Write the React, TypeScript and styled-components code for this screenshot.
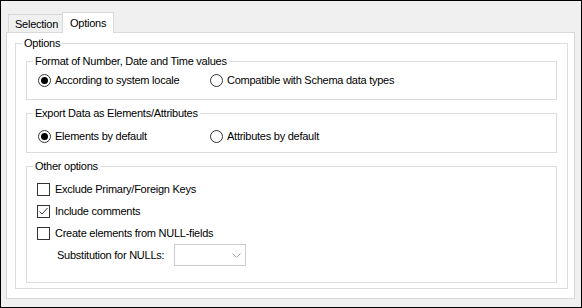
import { FC, ReactNode } from "react";
import styled, { createGlobalStyle } from "styled-components";

const GlobalStyle = createGlobalStyle`
  html, body {
    margin: 0;
    padding: 0;
    background: #f0f0f0;
  }

  * {
    box-sizing: border-box;
  }
`;

type ChoiceProps = {
  checked?: boolean;
  children: ReactNode;
};

const RadioOption: FC<ChoiceProps> = ({ checked, children }) => (
  <Choice>
    <RadioMark $checked={checked} />
    <span>{children}</span>
  </Choice>
);

const CheckOption: FC<ChoiceProps> = ({ checked, children }) => (
  <Choice>
    <CheckMark>
      {checked && (
        <svg width="11" height="11" viewBox="0 0 11 11">
          <polyline
            points="1.5,5.5 4,8 9.5,2"
            fill="none"
            stroke="#333"
            strokeWidth="1"
          />
        </svg>
      )}
    </CheckMark>
    <span>{children}</span>
  </Choice>
);

const App: FC = () => {
  return (
    <>
      <GlobalStyle />
      <Window>
        <TabStrip>
          <Tab>Selection</Tab>
          <Tab $active>Options</Tab>
        </TabStrip>
        <Panel>
          <GroupBox $pad="4px 10px 5px 10px">
            <Legend $shift={-4}>Options</Legend>

            <GroupBox $pad="6px 10px 12px 11px">
              <Legend $shift={-5}>Format of Number, Date and Time values</Legend>
              <OptionGrid>
                <RadioOption checked>According to system locale</RadioOption>
                <RadioOption>Compatible with Schema data types</RadioOption>
              </OptionGrid>
            </GroupBox>

            <GroupBox $pad="10px 10px 9px 11px" $spaced>
              <Legend $shift={-5}>Export Data as Elements/Attributes</Legend>
              <OptionGrid>
                <RadioOption checked>Elements by default</RadioOption>
                <RadioOption>Attributes by default</RadioOption>
              </OptionGrid>
            </GroupBox>

            <GroupBox $pad="10px 10px 16px 11px" $spaced>
              <Legend $shift={-5}>Other options</Legend>
              <CheckList>
                <CheckOption>Exclude Primary/Foreign Keys</CheckOption>
                <CheckOption checked>Include comments</CheckOption>
                <CheckOption>Create elements from NULL-fields</CheckOption>
              </CheckList>
              <SubstitutionRow>
                <FieldLabel>Substitution for NULLs:</FieldLabel>
                <ComboBox>
                  <ComboArrow>
                    <svg width="9" height="5" viewBox="0 0 9 5">
                      <polyline
                        points="0.5,0.5 4.5,4.5 8.5,0.5"
                        fill="none"
                        stroke="#a6a6a6"
                        strokeWidth="1"
                      />
                    </svg>
                  </ComboArrow>
                </ComboBox>
              </SubstitutionRow>
            </GroupBox>
          </GroupBox>
        </Panel>
      </Window>
    </>
  );
};

export default App;

const Window = styled.div`
  width: 582px;
  height: 308px;
  border: 1px solid #000;
  background: #f0f0f0;
  padding: 11px 6px 8px 5px;
  display: flex;
  flex-direction: column;
  font-family: "Liberation Sans", Arial, sans-serif;
  font-size: 11px;
  letter-spacing: -0.25px;
  color: #000;
`;

const TabStrip = styled.div`
  display: flex;
  height: 21px;
  margin: 0 0 -1px 2px;
`;

const Tab = styled.div<{ $active?: boolean }>`
  height: ${({ $active }) => ($active ? "21px" : "18px")};
  margin-top: ${({ $active }) => ($active ? "0" : "2px")};
  margin-right: ${({ $active }) => ($active ? "0" : "-1px")};
  padding: ${({ $active }) => ($active ? "3px 7px 0" : "2px 6px 0")};
  width: ${({ $active }) => ($active ? "52px" : "55px")};
  text-align: center;
  line-height: 14px;
  border: 1px solid #d9d9d9;
  border-bottom: none;
  background: ${({ $active }) => ($active ? "#fff" : "#f0f0f0")};
  position: ${({ $active }) => ($active ? "relative" : "static")};
  z-index: ${({ $active }) => ($active ? 1 : "auto")};
`;

const Panel = styled.div`
  flex: 1;
  border: 1px solid #d9d9d9;
  background: #fff;
  padding: 3px 6px 0 8px;
`;

const GroupBox = styled.fieldset<{ $pad: string; $spaced?: boolean }>`
  margin: ${({ $spaced }) => ($spaced ? "6px 0 0" : "0")};
  min-width: 0;
  border: 1px solid #dcdcdc;
  padding: ${({ $pad }) => $pad};
`;

const Legend = styled.legend<{ $shift: number }>`
  margin-left: ${({ $shift }) => $shift}px;
  padding: 0 2px;
  line-height: 14px;
`;

const OptionGrid = styled.div`
  display: grid;
  grid-template-columns: 172px auto;
`;

const Choice = styled.label`
  display: flex;
  align-items: center;
  gap: 4px;
  height: 13px;
  line-height: 13px;
  white-space: nowrap;
`;

const RadioMark = styled.span<{ $checked?: boolean }>`
  flex: none;
  width: 13px;
  height: 13px;
  border: 1px solid #333;
  border-radius: 50%;
  background: #fff;
  display: flex;
  align-items: center;
  justify-content: center;

  &::after {
    content: "";
    width: 7px;
    height: 7px;
    border-radius: 50%;
    background: ${({ $checked }) => ($checked ? "#000" : "transparent")};
  }
`;

const CheckMark = styled.span`
  flex: none;
  width: 13px;
  height: 13px;
  margin-left: -1px;
  margin-right: 1px;
  border: 1px solid #333;
  background: #fff;
  display: flex;
  align-items: center;
  justify-content: center;
`;

const CheckList = styled.div`
  display: flex;
  flex-direction: column;
  gap: 9px;
`;

const SubstitutionRow = styled.div`
  display: flex;
  align-items: center;
  margin-top: 4px;
  padding-left: 19px;
`;

const FieldLabel = styled.span`
  width: 117px;
  white-space: nowrap;
`;

const ComboBox = styled.div`
  width: 72px;
  height: 22px;
  border: 1px solid #cccccc;
  background: #fff;
  display: flex;
  justify-content: flex-end;
`;

const ComboArrow = styled.span`
  width: 17px;
  display: flex;
  align-items: center;
  justify-content: center;
`;
